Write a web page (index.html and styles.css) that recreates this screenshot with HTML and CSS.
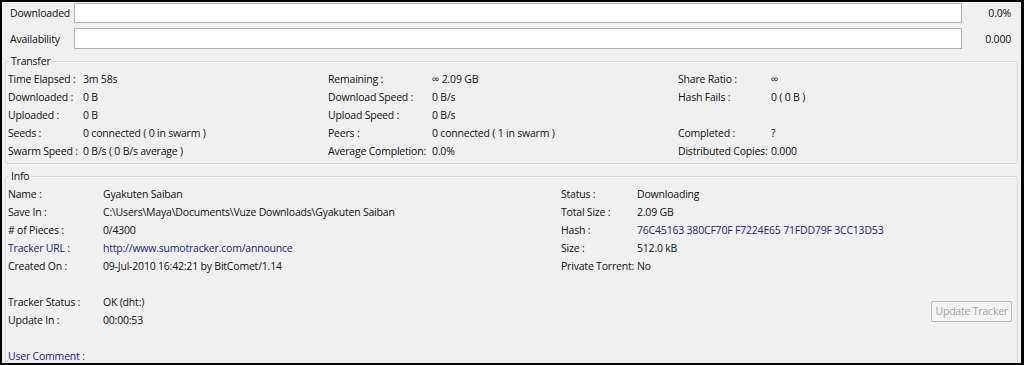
FILE: index.html
```html
<!DOCTYPE html>
<html>
  <head>
    <title>Torrent General</title>
    <meta http-equiv="Content-Type" content="text/html; charset=UTF-8"/>
    <link rel="stylesheet" href="styles.css">
  </head>
  <body>
    <div class="frame">
      <div class="bars">
        <span class="bar-label">Downloaded</span>
        <div class="bar"></div>
        <span class="bar-value">0.0%</span>
        <span class="bar-label">Availability</span>
        <div class="bar tall"></div>
        <span class="bar-value">0.000</span>
      </div>

      <fieldset class="group">
        <legend>Transfer</legend>
        <div class="grid transfer">
          <span>Time Elapsed :</span><span>3m 58s</span>
          <span>Remaining :</span><span>∞ 2.09 GB</span>
          <span>Share Ratio :</span><span>∞</span>

          <span>Downloaded :</span><span>0 B</span>
          <span>Download Speed :</span><span>0 B/s</span>
          <span>Hash Fails :</span><span>0 ( 0 B )</span>

          <span>Uploaded :</span><span>0 B</span>
          <span>Upload Speed :</span><span>0 B/s</span>
          <span></span><span></span>

          <span>Seeds :</span><span>0 connected ( 0 in swarm )</span>
          <span>Peers :</span><span>0 connected ( 1 in swarm )</span>
          <span>Completed :</span><span>?</span>

          <span>Swarm Speed :</span><span>0 B/s ( 0 B/s average )</span>
          <span>Average Completion:</span><span>0.0%</span>
          <span>Distributed Copies:</span><span>0.000</span>
        </div>
      </fieldset>

      <fieldset class="group info-group">
        <legend>Info</legend>
        <div class="grid info">
          <button class="update" disabled>Update Tracker</button>

          <span>Name :</span><span>Gyakuten Saiban</span>
          <span>Status :</span><span>Downloading</span>

          <span>Save In :</span><span>C:\Users\Maya\Documents\Vuze Downloads\Gyakuten Saiban</span>
          <span>Total Size :</span><span>2.09 GB</span>

          <span># of Pieces :</span><span>0/4300</span>
          <span>Hash :</span><span class="link">76C45163 380CF70F F7224E65 71FDD79F 3CC13D53</span>

          <span class="link">Tracker URL :</span><span class="link">http://www.sumotracker.com/announce</span>
          <span>Size :</span><span>512.0 kB</span>

          <span>Created On :</span><span>09-Jul-2010 16:42:21 by BitComet/1.14</span>
          <span>Private Torrent:</span><span>No</span>

          <span class="blank"></span>

          <span>Tracker Status :</span><span>OK (dht:)</span>
          <span>Update In :</span><span>00:00:53</span>

          <span class="blank"></span>

          <span class="link">User Comment :</span>
        </div>
      </fieldset>
    </div>
  </body>
</html>
```

FILE: styles.css
```css
html, body {
  margin: 0;
  padding: 0;
}

body {
  font-family: 'Open Sans', 'Noto Sans', sans-serif;
  font-size: 10.5px;
  letter-spacing: -0.2px;
  color: #111;
  background: #000;
}

.frame {
  box-sizing: border-box;
  width: 1024px;
  height: 365px;
  overflow: hidden;
  background: #f0f0f0;
  border-top: 2px solid #000;
  border-left: 2px solid #000;
  border-right: 3px solid #000;
  border-bottom: 2px solid #000;
  padding: 1px 3px 0 3px;
}

.bars {
  display: grid;
  grid-template-columns: 69px 888px 1fr;
  row-gap: 5px;
  align-items: center;
  padding-right: 7px;
}

.bar-label {
  padding-left: 5px;
}

.bar {
  height: 18px;
  background: #fff;
  border: 1px solid #b4b4b4;
}

.bar.tall {
  height: 19px;
}

.bar-value {
  text-align: right;
}

.group {
  margin: 4px 0 0 0;
  padding: 0 0 3px 2px;
  border: 1px solid #d6d6d6;
  border-radius: 3px;
  box-shadow: inset 1px 1px 0 #fafafa;
}

.group legend {
  padding: 0 2px;
  margin-left: 1px;
  line-height: 16px;
}

.grid {
  display: grid;
  grid-auto-rows: 18px;
  align-items: center;
  white-space: nowrap;
}

.transfer {
  grid-template-columns: 75px 245px 104px 246px 93px 1fr;
  padding-top: 1px;
}

.info-group {
  margin-top: 4px;
  padding-bottom: 0;
}

.info {
  grid-template-columns: 95px 458px 76px 1fr;
  padding-top: 1px;
}

.blank {
  grid-column: 1 / -1;
}

.link {
  color: #22228a;
}

.update {
  grid-column: 3 / span 2;
  grid-row: 7 / span 2;
  justify-self: end;
  align-self: center;
  margin-right: 5px;
  height: 21px;
  padding: 0 3px;
  font: inherit;
  letter-spacing: inherit;
  color: #a3a3a3;
  background: #f4f4f4;
  border: 1px solid #b9b9b9;
  border-radius: 2px;
}
```
